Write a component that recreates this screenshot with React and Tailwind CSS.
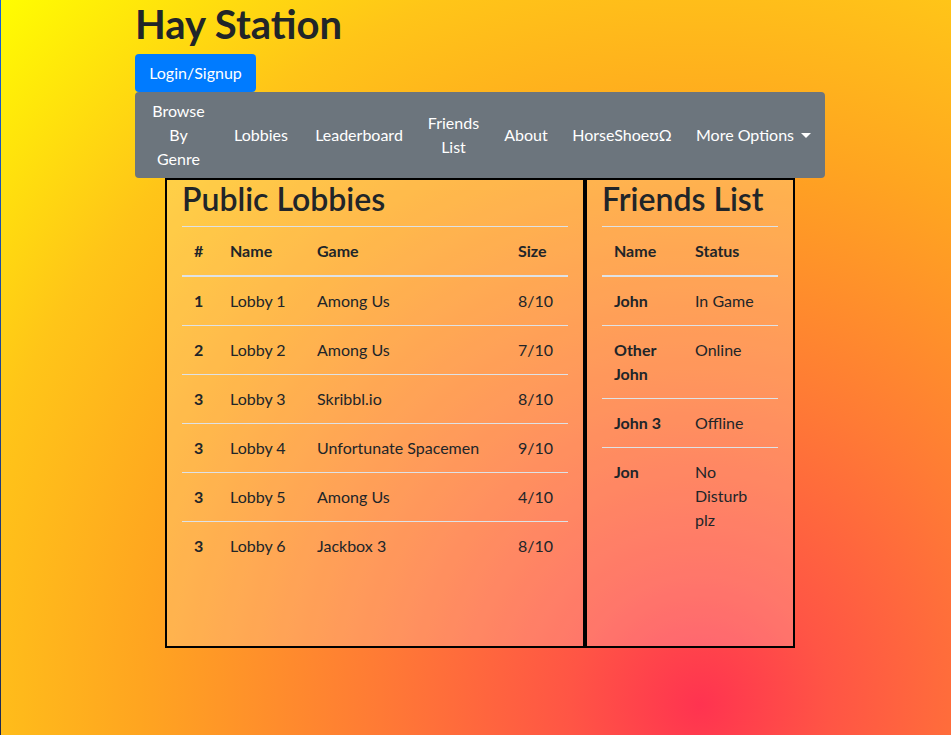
import React from "react";

const lobbies = [
  ["1", "Lobby 1", "Among Us", "8/10"],
  ["2", "Lobby 2", "Among Us", "7/10"],
  ["3", "Lobby 3", "Skribbl.io", "8/10"],
  ["3", "Lobby 4", "Unfortunate Spacemen", "9/10"],
  ["3", "Lobby 5", "Among Us", "4/10"],
  ["3", "Lobby 6", "Jackbox 3", "8/10"],
];

const friends = [
  [["John"], ["In Game"]],
  [["Other", "John"], ["Online"]],
  [["John 3"], ["Offline"]],
  [["Jon"], ["No", "Disturb", "plz"]],
];

function Lines({ lines }) {
  return lines.map((l, i) => (
    <React.Fragment key={i}>
      {i > 0 && <br />}
      {l}
    </React.Fragment>
  ));
}

const th = "px-3 py-3 text-left align-bottom font-bold border-t border-b-2 border-[#dee2e6]";
const td = (i) => `px-3 py-3 align-top ${i > 0 ? "border-t border-[#dee2e6]" : ""}`;

export default function App() {
  return (
    <div className="flex min-h-screen w-full bg-[radial-gradient(circle_at_700px_705px,#ff3350_0px,#ff5545_130px,#ff7a35_320px,#ffa520_560px,#ffc518_750px,#ffff00_1000px)] font-['Lato','Noto_Sans',sans-serif] text-[16px] leading-6 text-[#212529]">
      <div className="w-px shrink-0 bg-gradient-to-b from-[#1565d8] to-[#1f2a4f]" />
      <div className="ml-[134px] w-[690px] flex flex-col">
        <h1 className="text-[40px] leading-[48px] font-bold mb-[6px]">Hay Station</h1>
        <div>
          <button className="h-[38px] w-[121px] rounded-[4px] bg-[#007bff] text-white text-center">Login/Signup</button>
        </div>
        <nav className="h-[86px] rounded-[4px] bg-[#6c757d] text-white flex items-center pl-[3px]">
          <div className="w-[81px] text-center">Browse<br />By<br />Genre</div>
          <div className="w-[84px] text-center">Lobbies</div>
          <div className="w-[112px] text-center">Leaderboard</div>
          <div className="w-[77px] text-center">Friends<br />List</div>
          <div className="w-[68px] text-center">About</div>
          <div className="w-[124px] text-center">HorseShoeʊΩ</div>
          <div className="w-[139px] flex items-center justify-center">
            <span>More Options</span>
            <span className="ml-[7px] inline-block w-0 h-0 border-x-[5px] border-x-transparent border-t-[5px] border-t-white" />
          </div>
        </nav>
        <div className="flex justify-center">
          <div className="w-[420px] h-[470px] border-2 border-black bg-white/20 px-[15px]">
            <h2 className="text-[32px] leading-[38px] font-semibold mb-2">Public Lobbies</h2>
            <table className="w-full table-fixed border-separate border-spacing-0">
              <colgroup>
                <col className="w-[36px]" />
                <col className="w-[87px]" />
                <col className="w-[201px]" />
                <col className="w-[62px]" />
              </colgroup>
              <thead>
                <tr>
                  <th className={th}>#</th>
                  <th className={th}>Name</th>
                  <th className={th}>Game</th>
                  <th className={th}>Size</th>
                </tr>
              </thead>
              <tbody>
                {lobbies.map((r, i) => (
                  <tr key={i}>
                    <td className={`${td(i)} font-bold`}>{r[0]}</td>
                    <td className={td(i)}>{r[1]}</td>
                    <td className={`${td(i)} whitespace-nowrap`}>{r[2]}</td>
                    <td className={td(i)}>{r[3]}</td>
                  </tr>
                ))}
              </tbody>
            </table>
          </div>
          <div className="w-[210px] h-[470px] border-2 border-black bg-white/20 px-[15px]">
            <h2 className="text-[32px] leading-[38px] font-semibold mb-2 whitespace-nowrap">Friends List</h2>
            <table className="w-full table-fixed border-separate border-spacing-0">
              <colgroup>
                <col className="w-[81px]" />
                <col className="w-[95px]" />
              </colgroup>
              <thead>
                <tr>
                  <th className={th}>Name</th>
                  <th className={th}>Status</th>
                </tr>
              </thead>
              <tbody>
                {friends.map((r, i) => (
                  <tr key={i}>
                    <td className={`${td(i)} font-bold`}><Lines lines={r[0]} /></td>
                    <td className={td(i)}><Lines lines={r[1]} /></td>
                  </tr>
                ))}
              </tbody>
            </table>
          </div>
        </div>
      </div>
    </div>
  );
}
